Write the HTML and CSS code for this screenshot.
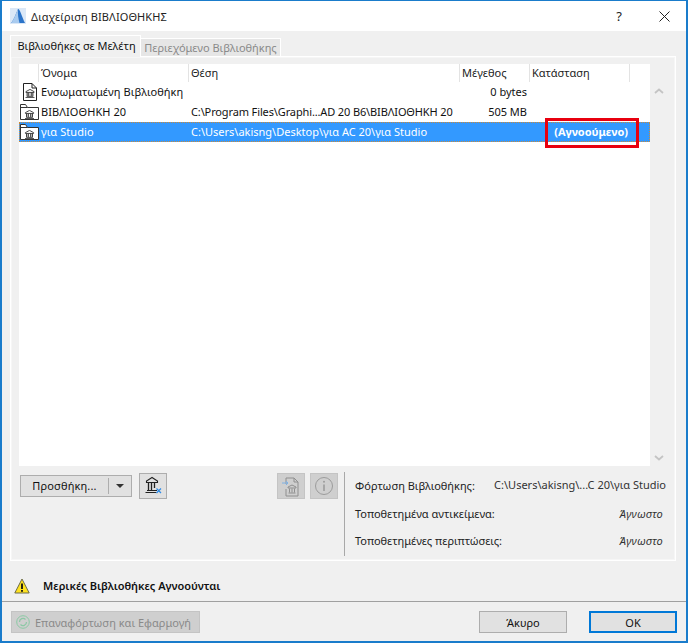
FILE: index.html
```html
<!DOCTYPE html>
<html lang="el">
<head>
<meta charset="utf-8">
<title>Διαχείριση ΒΙΒΛΙΟΘΗΚΗΣ</title>
<link rel="stylesheet" href="styles.css">
</head>
<body>
<svg class="defs" width="0" height="0">
  <symbol id="bank" viewBox="0 0 12 11">
    <path d="M6 .5 1 3.200v1h10v-1zM2 9h8M.5 10.500h11" fill="none" stroke="currentColor"/>
    <path d="M2.500 4.500v4M4.500 4.500v4M7.500 4.500v4M9.500 4.500v4" fill="none" stroke="currentColor" stroke-width="1.200"/>
  </symbol>
  <symbol id="doc" viewBox="0 0 14 18">
    <path d="M.5 .5h8.500l4.500 4.500v12.500H.5zM9 .5V5h4.500" fill="#fff" stroke="#222"/>
  </symbol>
  <symbol id="folder" viewBox="0 0 19 16">
    <path d="M.5 15.500V.5h5l2 3h11v12z" fill="#fff" stroke="#333"/>
    <path d="M.5 3.500h7" fill="none" stroke="#333"/>
  </symbol>
</svg>
<div class="window">
  <header class="titlebar">
    <svg class="app-icon" viewBox="0 0 16 16" width="16" height="16">
      <rect width="16" height="16" fill="#dbe8f7"/>
      <path d="M1 15C4 12 6 5 8 1c2 0 4 8 7 14z" fill="#2b74c9"/>
      <path d="M1 15C4 12 6 5 8 1c-.5 5 .5 10 1.500 14z" fill="#a9cbef"/>
    </svg>
    <span class="title">Διαχείριση ΒΙΒΛΙΟΘΗΚΗΣ</span>
    <span class="help">?</span>
    <svg class="close" viewBox="0 0 11 11" width="11" height="11"><path d="M.5.5l10 10M10.500.5l-10 10" stroke="#222" fill="none"/></svg>
  </header>
  <main class="content">
    <nav class="tabs">
      <span class="tab tab-active">Βιβλιοθήκες σε Μελέτη</span>
      <span class="tab tab-off">Περιεχόμενο Βιβλιοθήκης</span>
    </nav>
    <section class="panel">
      <div class="list-wrap">
        <div class="list">
          <div class="row head">
            <span class="c-icon"></span>
            <span class="c-name">Όνομα</span>
            <span class="c-path">Θέση</span>
            <span class="c-size">Μέγεθος</span>
            <span class="c-state">Κατάσταση</span>
            <span class="c-end"></span>
          </div>
          <div class="row">
            <span class="c-icon"><span class="ic-doc"><svg class="i-doc"><use href="#doc"/></svg><svg class="i-bank-s"><use href="#bank"/></svg></span></span>
            <span class="c-name">Ενσωματωμένη Βιβλιοθήκη</span>
            <span class="c-path"></span>
            <span class="c-size">0 bytes</span>
            <span class="c-state"></span>
            <span class="c-end"></span>
          </div>
          <div class="row">
            <span class="c-icon"><span class="ic-folder"><svg class="i-folder"><use href="#folder"/></svg><svg class="i-bank-f"><use href="#bank"/></svg></span></span>
            <span class="c-name">ΒΙΒΛΙΟΘΗΚΗ 20</span>
            <span class="c-path tight">C:\Program Files\Graphi...AD 20 B6\ΒΙΒΛΙΟΘΗΚΗ 20</span>
            <span class="c-size">505 MB</span>
            <span class="c-state"></span>
            <span class="c-end"></span>
          </div>
          <div class="row selected">
            <span class="c-icon"><span class="ic-folder"><svg class="i-folder"><use href="#folder"/></svg><svg class="i-bank-f"><use href="#bank"/></svg></span></span>
            <span class="c-name">για Studio</span>
            <span class="c-path">C:\Users\akisng\Desktop\για AC 20\για Studio</span>
            <span class="c-size"></span>
            <span class="c-state strong">(Αγνοούμενο)</span>
            <span class="c-end"></span>
            <span class="callout"></span>
          </div>
        </div>
        <div class="scroll">
          <svg class="chev" viewBox="0 0 10 6" width="10" height="6"><path d="M1 5l4-3.500L9 5" fill="none" stroke="#c4c4c4" stroke-width="1.800"/></svg>
          <svg class="chev" viewBox="0 0 10 6" width="10" height="6"><path d="M1 1l4 3.500L9 1" fill="none" stroke="#c4c4c4" stroke-width="1.800"/></svg>
        </div>
      </div>
      <div class="controls">
        <div class="actions">
          <div class="split">
            <span class="split-main">Προσθήκη...</span>
            <span class="split-arrow"></span>
          </div>
          <button class="icon-btn remove" type="button">
            <svg viewBox="0 0 22 20" width="22" height="20">
              <path d="M10 1.500 4.500 5v1.500h11V5zM5 14.500h10M3.500 16.500h11" fill="none" stroke="#222" stroke-width="1.100"/>
              <path d="M6.500 7v7M9.500 7v7M12.500 7v5" fill="none" stroke="#222" stroke-width="1.300"/>
              <path d="M14.500 12.500l4.500 4.500M19 12.500 14.500 17" fill="none" stroke="#2f8be6" stroke-width="1.200"/>
            </svg>
          </button>
          <button class="icon-btn off push" type="button">
            <svg viewBox="0 0 20 22" width="20" height="22">
              <path d="M5 3h8l4 4v14H5v-7M5 9V3M13 3v4h4" fill="none" stroke="#8f8f8f"/>
              <path d="M1 8h6M5 6l2 2-2 2" fill="none" stroke="#7fb2e6"/>
              <path d="M11 10 7 12v1h8v-1zM7.500 18h7M8.500 13.500V17.500M11 13.500V17.500M13.500 13.500V17.500" fill="none" stroke="#8f8f8f"/>
            </svg>
          </button>
          <button class="icon-btn off" type="button">
            <svg viewBox="0 0 20 20" width="20" height="20">
              <circle cx="10" cy="10" r="8.500" fill="none" stroke="#9c9c9c"/>
              <path d="M10 8.500V15" stroke="#9c9c9c" stroke-width="1.600" fill="none"/>
              <circle cx="10" cy="5.800" r="1" fill="#9c9c9c"/>
            </svg>
          </button>
        </div>
        <dl class="info">
          <div class="info-row first"><dt>Φόρτωση Βιβλιοθήκης:</dt><dd class="val-path">C:\Users\akisng\...C 20\για Studio</dd></div>
          <div class="info-row"><dt>Τοποθετημένα αντικείμενα:</dt><dd><em>Άγνωστο</em></dd></div>
          <div class="info-row"><dt>Τοποθετημένες περιπτώσεις:</dt><dd><em>Άγνωστο</em></dd></div>
        </dl>
      </div>
    </section>
    <div class="notice">
      <svg viewBox="0 0 16 16" width="16" height="16">
        <path d="M8 1 .8 15h14.400z" fill="#ffe21f" stroke="#6b6b4a" stroke-linejoin="round"/>
        <path d="M8 5.500v5.500" stroke="#111" stroke-width="1.800"/>
        <rect x="7.100" y="12" width="1.800" height="1.800" fill="#111"/>
      </svg>
      <span>Μερικές Βιβλιοθήκες Αγνοούνται</span>
    </div>
    <footer class="footer">
      <button class="btn reload" type="button">
        <svg viewBox="0 0 14 14" width="14" height="14">
          <circle cx="7" cy="7" r="6.300" fill="none" stroke="#8cc9a5"/>
          <path d="M3.500 7a3.500 3.500 0 0 1 6-2.500M10.500 7a3.500 3.500 0 0 1-6 2.500" fill="none" stroke="#8cc9a5" stroke-width="1.300"/>
        </svg>
        Επαναφόρτωση και Εφαρμογή
      </button>
      <button class="btn cancel" type="button">Άκυρο</button>
      <button class="btn ok" type="button">ΟΚ</button>
    </footer>
  </main>
</div>
</body>
</html>
```
FILE: styles.css
```css
* { box-sizing: border-box; }
html, body { margin: 0; padding: 0; }
body { font-family: "Noto Sans", "Open Sans", sans-serif; font-size: 11px; color: #111; background: #f0f0f0; }
.defs { position: absolute; }
.window { width: 688px; height: 643px; display: flex; flex-direction: column; border: 1px solid #1a7ccb; border-left-width: 2px; border-right-width: 2px; border-bottom-width: 2px; background: #f0f0f0; overflow: hidden; }
.titlebar { height: 30px; flex: none; background: #fff; display: flex; align-items: center; padding-left: 8px; }
.app-icon { margin-right: 5px; }
.title { font-size: 11px; letter-spacing: .1px; color: #222; flex: 1; }
.help { font-size: 13px; margin-right: 37px; color: #222; }
.close { margin-right: 16px; }
.content { flex: 1; display: flex; flex-direction: column; padding: 0 10px 0 8px; min-height: 0; }
.tabs { display: flex; align-items: flex-end; height: 25px; flex: none; }
.tab { display: flex; align-items: center; justify-content: center; }
.tab-active { width: 131px; height: 22px; background: #f0f0f0; border: 1px solid #fff; border-bottom: 0; color: #111; padding: 0 0 2px 2px; position: relative; z-index: 1; margin-bottom: -1px; }
.tab-off { width: 140px; height: 18px; background: #e6e6e6; border: 1px solid #fff; border-bottom: 0; border-left: 0; color: #8a8a8a; }
.panel { height: 505px; flex: none; border: 1px solid #fff; padding: 7px 0 0 8px; box-shadow: inset 0 0 0 1px #f6f6f6; display: flex; flex-direction: column; }
.list-wrap { display: flex; height: 402px; flex: none; }
.list { width: 631px; background: #fff; flex: none; }
.scroll { width: 16px; padding: 24px 0 0 2px; margin-bottom: 5px; display: flex; flex-direction: column; justify-content: space-between; align-items: center; }
.row { display: flex; height: 20px; align-items: center; position: relative; white-space: nowrap; }
.row > span { padding-bottom: 1px; }
.head { height: 18px; }
.head > span { height: 18px; display: flex; align-items: center; border-left: 1px solid #e3e3e3; padding: 0 0 2px 2px; color: #222; }
.head > .c-icon { border-left: 0; }
.c-icon { width: 19px; flex: none; position: relative; height: 20px; }
.c-name { width: 150px; flex: none; padding-left: 3px; letter-spacing: .08px; overflow: visible; }
.c-path { width: 271px; flex: none; padding-left: 3px; }
.tight { letter-spacing: -.13px; }
.c-size { width: 70px; flex: none; text-align: right; padding-right: 2px; }
.c-state { width: 100px; flex: none; padding-left: 2px; }
.c-end { width: 21px; flex: none; }
.selected { background: #3399ff; color: #fff; outline: 1px dotted #c98a3c; outline-offset: -1px; }
.strong { font-weight: 700; text-align: right; padding-right: 1px; }
.row > .callout { position: absolute; left: 526px; top: -4px; width: 94px; height: 30px; padding: 0; border: 3px solid #e8000f; }
.ic-doc, .ic-folder { position: absolute; left: 0; top: 0; color: #222; }
.i-doc { position: absolute; left: 4px; top: 1px; width: 14px; height: 18px; }
.i-bank-s { position: absolute; left: 6px; top: 7px; width: 10px; height: 9px; }
.i-folder { position: absolute; left: 1px; top: 2px; width: 19px; height: 16px; }
.i-bank-f { position: absolute; left: 5px; top: 8px; width: 11px; height: 9px; }
.controls { flex: 1; display: flex; }
.actions { width: 326px; flex: none; display: flex; align-items: flex-start; padding: 1px 6px 0 1px; border-right: 1px solid #a8a8a8; margin-top: 6px; margin-bottom: 4px; }
.split { display: flex; width: 112px; height: 22px; background: #e1e1e1; border: 1px solid #adadad; align-items: center; margin-top: 2px; margin-right: 7px; }
.split-main { width: 88px; text-align: center; color: #111; letter-spacing: .15px; border-right: 1px solid #adadad; height: 16px; line-height: 16px; }
.split-arrow { width: 0; height: 0; border: 4px solid transparent; border-top: 4px solid #333; border-bottom: 0; margin-left: 7px; }
.icon-btn { width: 28px; height: 26px; padding: 0; background: #e1e1e1; border: 1px solid #adadad; display: flex; align-items: center; justify-content: center; }
.icon-btn.off { background: #cfcfcf; border-color: #c4c4c4; margin-left: 5px; }
.icon-btn.push { margin-left: auto; }
.info { flex: 1; margin: 0; padding: 6px 9px 0 10px; }
.info-row { display: flex; justify-content: space-between; align-items: center; height: 27.500px; color: #222; }
.info-row dd { margin: 0; padding-right: 3px; color: #333; letter-spacing: .2px; }
.info-row .val-path { padding-right: 0; position: relative; top: -1px; letter-spacing: 0; }
.notice { height: 41px; flex: none; display: flex; align-items: center; gap: 13px; font-weight: 600; color: #111; border-bottom: 1px solid #a0a0a0; margin: 0 -10px 0 -8px; padding: 9px 0 0 12px; }
.notice span { font-size: 11px; }
.footer { flex: 1; display: flex; align-items: flex-start; padding-top: 9px; margin-right: -1px; }
.btn { height: 22px; font: inherit; background: #e1e1e1; border: 1px solid #adadad; color: #111; padding: 0; }
.reload { width: 189px; margin-left: 1px; background: #cfcfcf; border-color: #c4c4c4; color: #8a8a8a; display: flex; align-items: center; gap: 5px; padding-left: 4px; }
.cancel { width: 88px; margin-left: auto; }
.ok { width: 88px; margin-left: 22px; border: 2px solid #0078d7; }
```
